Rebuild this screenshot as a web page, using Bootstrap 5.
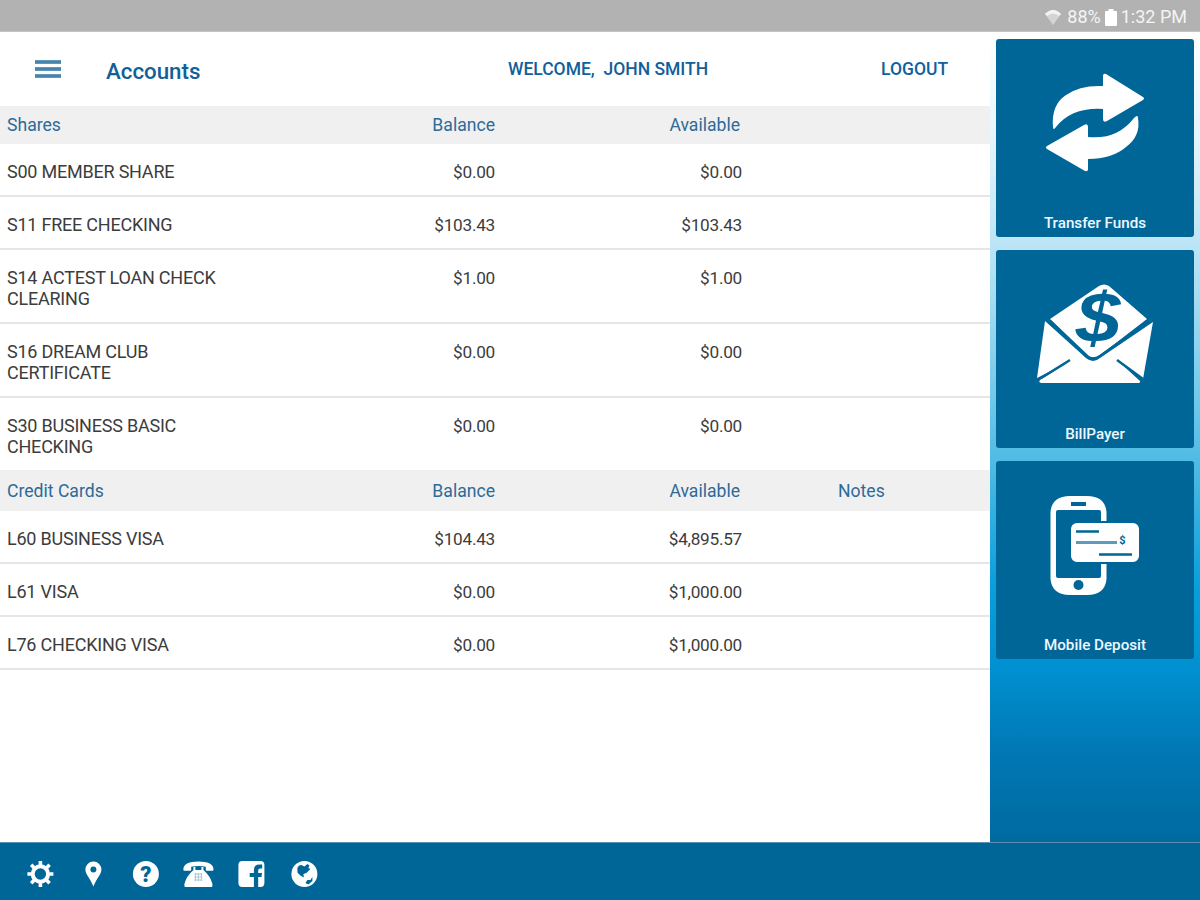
<!DOCTYPE html>
<html lang="en">
<head>
<meta charset="utf-8">
<meta name="viewport" content="width=device-width, initial-scale=1">
<title>Accounts</title>
<link href="https://cdn.jsdelivr.net/npm/bootstrap@5.3.0/dist/css/bootstrap.min.css" rel="stylesheet">
<style>
:root{--brand:#006698}
body{font-family:Roboto,"Liberation Sans",sans-serif;font-size:18px;line-height:20.5px;color:#3c3c3c;background:#fff}
.app-shell{height:900px;width:1200px}
.status-strip{height:32px;background:#b2b2b2;border-bottom:1px solid #c4c4c4;color:#f4f4f4;font-size:18px;padding:3px 13px 0 0}
.main-pane{width:990px}
.top-bar{height:74px;color:#11609a;font-weight:500;font-size:17.5px;padding-top:1px}
.page-title{font-size:22.3px;line-height:26px;padding-top:2px}
.sec-head{height:38px;background:#f0f0f0;color:#2d6a98;padding-top:9px;font-size:17.6px}
.sec-head.tall{height:41px;padding-top:11px}
.acct{height:53px;padding-top:18px;border-bottom:2px solid #e6e6e6}
.acct .c-name{letter-spacing:-.22px}
.acct .c-bal,.acct .c-avail{font-size:17.2px;letter-spacing:-.25px}
.acct.two{height:74px;padding-top:18px}
.acct.last{height:72px;border:0}
.c-name{width:250px;padding-left:7px}
.c-bal{width:245px;text-align:right}
.c-avail{width:247px;text-align:right}
.sec-head .c-avail{width:245px}
.c-notes{padding-left:98px}
.side-pane{width:210px;padding:7px 6px 0;gap:13px;background:linear-gradient(#fff 0,#e2f4fb 14%,#a9def3 32%,#50bbe4 53%,#0aa0dc 68%,#008fd0 79%,#0078b4 89%,#006a9f 100%)}
.tile{height:198px;background:var(--brand);border-radius:3px;color:#eef8ff;font-size:15.2px;font-weight:500}
.tile span{line-height:20px;margin-bottom:4px}
.tile svg{width:198px;height:170px}
.foot-bar{height:58px;background:var(--brand);border-top:1px solid #5990b3;padding:5px 0 0 26px;gap:24px}
.foot-bar svg{width:28.8px;height:28px;overflow:visible}
</style>
</head>
<body>
<div class="app-shell d-flex flex-column overflow-hidden">
  <div class="status-strip d-flex justify-content-end align-items-center flex-shrink-0">
    <svg width="16" height="17" viewBox="0 0 16 17"><path d="M0 5Q8-3 16 5L8 16Z" fill="#d4d4d4"/><path d="M0 5Q8-3 16 5L14 7Q8 2 2 7Z" fill="#f2f2f2"/></svg>
    <span style="margin-left:6px">88%</span>
    <svg class="mx-1" width="12" height="17" viewBox="0 0 12 17"><path d="M3.500 0h5v2H11q1 0 1 1v13q0 1-1 1H1q-1 0-1-1V3q0-1 1-1h2.500z" fill="#fff"/></svg>
    <span>1:32 PM</span>
  </div>
  <div class="d-flex flex-grow-1">
    <main class="main-pane">
      <header class="top-bar d-flex align-items-center">
        <svg style="margin-left:35px" width="26" height="20" viewBox="0 0 26 20"><path d="M0 2h26M0 9h26M0 16h26" stroke="#6296ba" stroke-width="4"/><path d="M0 2h26M0 9h26M0 16h26" stroke="#3e7eaa" stroke-width="1.600"/></svg>
        <div class="page-title" style="margin-left:45px;width:402px">Accounts</div>
        <div style="width:373px;white-space:pre">WELCOME,  JOHN SMITH</div>
        <div>LOGOUT</div>
      </header>
      <div class="sec-head d-flex"><div class="c-name">Shares</div><div class="c-bal">Balance</div><div class="c-avail">Available</div></div>
      <div class="acct d-flex"><div class="c-name">S00 MEMBER SHARE</div><div class="c-bal">$0.00</div><div class="c-avail">$0.00</div></div>
      <div class="acct d-flex"><div class="c-name">S11 FREE CHECKING</div><div class="c-bal">$103.43</div><div class="c-avail">$103.43</div></div>
      <div class="acct two d-flex"><div class="c-name">S14 ACTEST LOAN CHECK<br>CLEARING</div><div class="c-bal">$1.00</div><div class="c-avail">$1.00</div></div>
      <div class="acct two d-flex"><div class="c-name">S16 DREAM CLUB<br>CERTIFICATE</div><div class="c-bal">$0.00</div><div class="c-avail">$0.00</div></div>
      <div class="acct two last d-flex"><div class="c-name">S30 BUSINESS BASIC<br>CHECKING</div><div class="c-bal">$0.00</div><div class="c-avail">$0.00</div></div>
      <div class="sec-head tall d-flex"><div class="c-name">Credit Cards</div><div class="c-bal">Balance</div><div class="c-avail">Available</div><div class="c-notes">Notes</div></div>
      <div class="acct d-flex"><div class="c-name">L60 BUSINESS VISA</div><div class="c-bal">$104.43</div><div class="c-avail">$4,895.57</div></div>
      <div class="acct d-flex"><div class="c-name">L61 VISA</div><div class="c-bal">$0.00</div><div class="c-avail">$1,000.00</div></div>
      <div class="acct d-flex"><div class="c-name">L76 CHECKING VISA</div><div class="c-bal">$0.00</div><div class="c-avail">$1,000.00</div></div>
    </main>
    <aside class="side-pane d-flex flex-column">
      <div class="tile d-flex flex-column align-items-center justify-content-between">
        <svg viewBox="0 0 198 170" fill="#fff"><path d="M57 88Q55 66 70 56Q84 46 107 47V37q0-3 3-2l37 23q2 1.500 0 3L111 82q-4 2-4-2V70Q76 68 60 88q-3 4-3 0z"/><path d="M142 79Q145 97 130 108Q116 120 92 120v10q0 3-3 2L51 110q-2-1.500 0-3L88 86q4-2 4 2v10Q121 101 138 79q4-4 4 0z"/></svg>
        <span>Transfer Funds</span>
      </div>
      <div class="tile d-flex flex-column align-items-center justify-content-between">
        <svg viewBox="0 0 198 170" fill="#fff"><path d="M54 69L103 36q5-3 10 0L151 69 103 106q-5 3-10 0z"/><path d="M49 71L90 108q7 6 14 0L157 72 147 129 121 110 144 131q1 2-3 2H46q-4 0-2-3L73 112 41 128z"/><path d="M54 71L90 106q7 5 14 0L153 71M121 110L147 129M74 110L45 128" fill="none" stroke="#006698" stroke-width="2.500"/><text x="102" y="92" text-anchor="middle" font-family="Liberation Sans,sans-serif" font-size="71" font-weight="700" font-style="italic" fill="#006698" transform="translate(102) scale(1.13 1) translate(-102)">$</text></svg>
        <span>BillPayer</span>
      </div>
      <div class="tile d-flex flex-column align-items-center justify-content-between">
        <svg viewBox="0 0 198 170"><path d="M54.500 51Q56 35 74 35h17Q109 35 110.500 51v67Q109 134 91 134H74Q56 134 54.500 118z" fill="#fff"/><rect x="60" y="49" width="45" height="68" rx="2" fill="#006698"/><rect x="75" y="41" width="15" height="4" fill="#006698"/><circle cx="82.500" cy="124" r="5" fill="#006698"/><rect x="74" y="61" width="70" height="41" rx="7" fill="#fff" stroke="#006698" stroke-width="2"/><path d="M80 70.500h23M103 93.500h33" stroke="#006698" stroke-width="2.500"/><path d="M80 81.500h41" stroke="#5d9bbd" stroke-width="3"/><text x="126.500" y="83" text-anchor="middle" font-size="11" font-weight="700" fill="#006698">$</text></svg>
        <span>Mobile Deposit</span>
      </div>
    </aside>
  </div>
  <footer class="foot-bar d-flex align-items-center flex-shrink-0">
    <svg viewBox="0 0 28 28"><g fill="none" stroke="#fff"><circle cx="14" cy="14" r="7.700" stroke-width="4"/><path d="M14 1v4M14 23v4M1 14h4M23 14h4M4.800 4.800l3.600 3.600M19.600 19.600l3.600 3.600M4.800 23.200l3.600-3.600M19.600 8.400l3.600-3.600" stroke-width="3.600"/></g></svg>
    <svg viewBox="0 0 28 28"><path d="M14 1.500a8 8 0 0 0-8 8.300C6 14 10.500 18 14 26.500 17.500 18 22 14 22 9.800a8 8 0 0 0-8-8.300z" fill="#fff"/><circle cx="14" cy="9.500" r="3" fill="#006698"/></svg>
    <svg viewBox="0 0 28 28"><circle cx="13.500" cy="14" r="13" fill="#fff"/><text x="13.500" y="21.500" text-anchor="middle" font-size="22" font-weight="900" fill="#006698">?</text></svg>
    <svg viewBox="0 0 28 28" fill="#fff"><path d="M-1 8.500Q0 1.500 14 1.500T29 8.500V10q0 .7-.8.700h-6q-.8 0-.8-.8V6.800Q14 5 6.800 6.800v3.100q0 .8-.8.800h-6q-1 0-1-.7z"/><path d="M9 7h2v3h6V7h2v3q7 6 9 14v2q0 1-1 1H1q-1 0-1-1v-2q2-8 9-14z"/><path d="M10 14h8M10 17h8M10 20h8M11 13v8M14 13v8M17 13v8" stroke="#a6c8da" stroke-width="1"/></svg>
    <svg viewBox="0 0 28 28"><rect x="1" y="1" width="26" height="26" rx="4" fill="#fff"/><path d="M16.500 27V17h-4.200v-4h4.200v-3q0-5.500 5.500-5.500h2.800v4h-2q-2 0-2 2V13h3.800l-.5 4h-3.300v10z" fill="#006698"/></svg>
    <svg viewBox="0 0 28 28"><circle cx="14" cy="14" r="13" fill="#fff"/><path d="M7 8Q8 5 11 5l3 1.500L17 4l2 1.500-1 2.500 2 1-4 4-3 1 .5 3.500-3.500-2-3-3z" fill="#006698"/><path d="M15 23l2-3h3l2-3v4l-4 3.500z" fill="#006698"/></svg>
  </footer>
</div>
<script src="https://cdn.jsdelivr.net/npm/bootstrap@5.3.0/dist/js/bootstrap.bundle.min.js"></script>
</body>
</html>
